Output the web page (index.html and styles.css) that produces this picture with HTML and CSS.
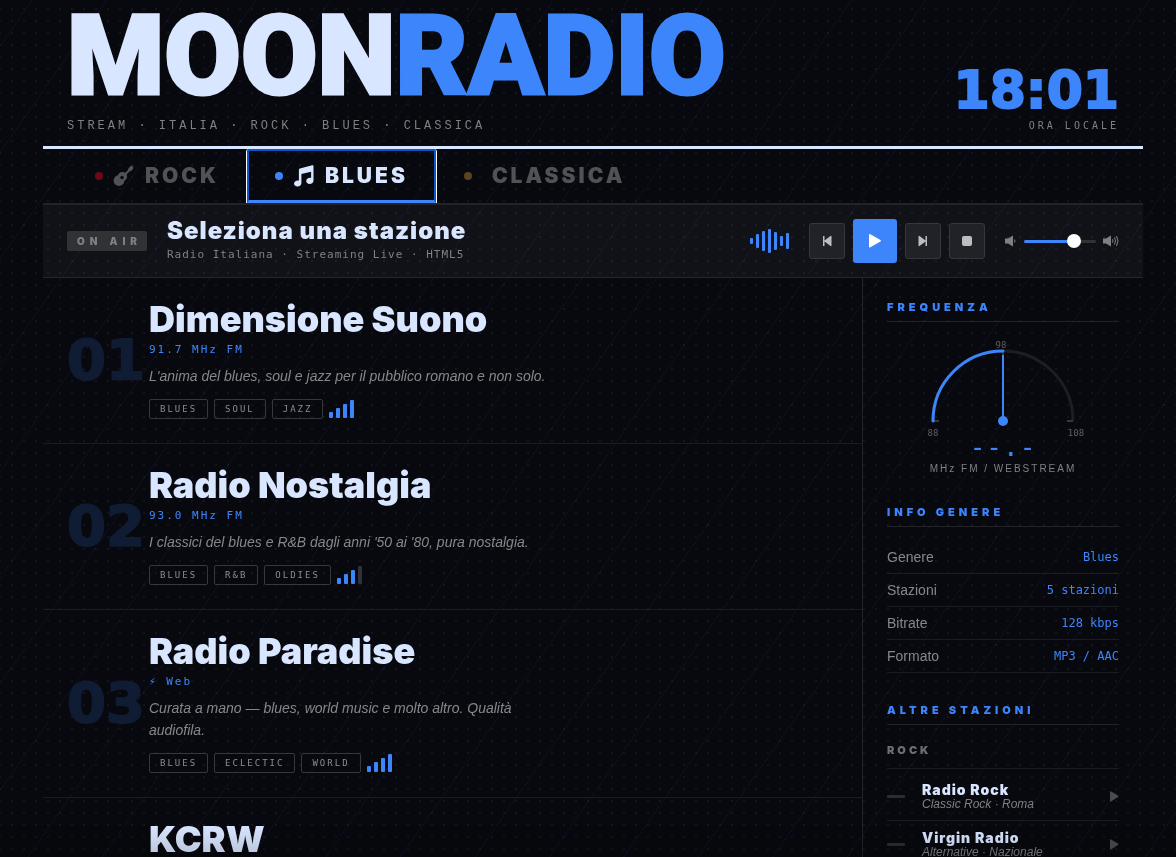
FILE: index.html
```html
<!DOCTYPE html>
<html lang="it">
<head>
  <meta charset="UTF-8">
  <meta name="viewport" content="width=device-width, initial-scale=1.0">
  <title>Moon Radio</title>
  <link rel="stylesheet" href="styles.css">
</head>
<body>
  <div class="wrapper">
    <header class="header">
      <div class="brand">
        <h1 class="logo">MOON<span>RADIO</span></h1>
        <p class="tagline">STREAM · ITALIA · ROCK · BLUES · CLASSICA</p>
      </div>
      <div class="clock">
        <div class="clock-time" id="clock">18:01</div>
        <div class="clock-label">ORA LOCALE</div>
      </div>
    </header>

    <nav class="tabs">
      <button class="tab tab-rock" type="button">
        <span class="dot"></span>
        <svg class="tab-icon" viewBox="0 0 22 22" fill="currentColor" stroke="currentColor" stroke-linecap="round">
          <circle cx="6" cy="15.500" r="5.400" stroke="none"/>
          <circle cx="9.500" cy="11.500" r="4.600" stroke="none"/>
          <path d="M11 10.500L17 4.500" stroke-width="2.200"/>
          <path d="M17 4.300L18.500 2.800" stroke-width="3.800"/>
          <circle cx="9" cy="12.500" r="1.700" fill="#08090e" stroke="none"/>
        </svg>
        ROCK
      </button>
      <button class="tab tab-blues active" type="button">
        <span class="dot"></span>
        <svg class="tab-icon" viewBox="0 0 22 22" fill="currentColor">
          <path d="M20.500 1.200v14.300c0 2-1.700 3.500-3.900 3.500-2 0-3.400-1.200-3.400-2.900 0-1.900 1.700-3.300 3.900-3.300.4 0 .7 0 1 .1V6.700L8.400 9.100v9c0 2-1.700 3.400-3.900 3.400-2 0-3.500-1.200-3.500-2.900 0-1.800 1.700-3.200 3.900-3.200.4 0 .7 0 1 .1V4.900c0-.7.4-1.100 1-1.300L19.300.3c.7-.2 1.200.2 1.200.9z"/>
        </svg>
        BLUES
      </button>
      <button class="tab tab-classica" type="button">
        <span class="dot"></span>
        CLASSICA
      </button>
    </nav>

    <section class="player">
      <span class="on-air">ON AIR</span>
      <div class="now">
        <div class="now-title">Seleziona una stazione</div>
        <div class="now-sub">Radio Italiana · Streaming Live · HTML5</div>
      </div>
      <div class="wave">
        <i class="w1"></i><i class="w2"></i><i class="w3"></i><i class="w4"></i><i class="w5"></i><i class="w6"></i><i class="w7"></i>
      </div>
      <div class="controls">
        <button class="ctrl" type="button" aria-label="Precedente">
          <svg width="12" height="12" viewBox="0 0 12 12" fill="currentColor"><path d="M2 1h1.500v4.500L9.500 1q1-.5 1 .5v9q0 1-1 .5L3.500 6.500V11H2z"/></svg>
        </button>
        <button class="ctrl ctrl-play" type="button" aria-label="Play">
          <svg width="14" height="16" viewBox="0 0 14 16" fill="currentColor"><path d="M1 2q0-1.500 1.400-.8l10 5.700q1.200.8 0 1.600l-10 5.800Q1 15 1 13.500z"/></svg>
        </button>
        <button class="ctrl" type="button" aria-label="Successiva">
          <svg width="12" height="12" viewBox="0 0 12 12" fill="currentColor"><path d="M10 1H8.500v4.500L2.500 1q-1-.5-1 .5v9q0 1 1 .5l6-4.500V11H10z"/></svg>
        </button>
        <button class="ctrl" type="button" aria-label="Stop">
          <svg width="12" height="12" viewBox="0 0 12 12" fill="currentColor"><rect x="1" y="1" width="10" height="10" rx="2"/></svg>
        </button>
      </div>
      <div class="volume">
        <svg width="12" height="12" viewBox="0 0 12 12"><path fill="currentColor" d="M0 3.500h3l5-3v11l-5-3H0z"/><path d="M9.500 4.500q1 1.500 0 3" fill="none" stroke="currentColor"/></svg>
        <input type="range" id="volume" min="0" max="100" value="74" aria-label="Volume">
        <svg width="16" height="12" viewBox="0 0 16 12"><path fill="currentColor" d="M0 3.500h3l5-3v11l-5-3H0z"/><path d="M9.500 4.200q1 1.800 0 3.600M11.500 2.500q2 3.500 0 7M13.500 1q3 5 0 10" fill="none" stroke="currentColor"/></svg>
      </div>
    </section>

    <div class="layout">
      <main class="stations">
        <article class="station">
          <div class="num">01</div>
          <div class="info">
            <h2>Dimensione Suono</h2>
            <div class="freq">91.7 MHz FM</div>
            <p class="desc">L'anima del blues, soul e jazz per il pubblico romano e non solo.</p>
            <div class="tags">
              <span class="tag">BLUES</span><span class="tag">SOUL</span><span class="tag">JAZZ</span>
              <span class="signal"><i></i><i></i><i></i><i></i></span>
            </div>
          </div>
        </article>
        <article class="station">
          <div class="num">02</div>
          <div class="info">
            <h2>Radio Nostalgia</h2>
            <div class="freq">93.0 MHz FM</div>
            <p class="desc">I classici del blues e R&amp;B dagli anni '50 ai '80, pura nostalgia.</p>
            <div class="tags">
              <span class="tag">BLUES</span><span class="tag">R&amp;B</span><span class="tag">OLDIES</span>
              <span class="signal"><i></i><i></i><i></i><i class="off"></i></span>
            </div>
          </div>
        </article>
        <article class="station">
          <div class="num">03</div>
          <div class="info">
            <h2>Radio Paradise</h2>
            <div class="freq">⚡&#xFE0E; Web</div>
            <p class="desc">Curata a mano — blues, world music e molto altro. Qualità audiofila.</p>
            <div class="tags">
              <span class="tag">BLUES</span><span class="tag">ECLECTIC</span><span class="tag">WORLD</span>
              <span class="signal"><i></i><i></i><i></i><i></i></span>
            </div>
          </div>
        </article>
        <article class="station">
          <div></div>
          <div class="info">
            <h2>KCRW</h2>
          </div>
        </article>
      </main>

      <aside class="sidebar">
        <section class="block">
          <h3>FREQUENZA</h3>
          <svg class="gauge" width="180" height="100" viewBox="0 0 180 100">
            <path d="M20 84a70 70 0 0 1 140 0" fill="none" stroke="#1d1e23" stroke-width="3"/>
            <path d="M20 84h6M154 84h6M90 14v6" stroke="#36373b" stroke-width="2"/>
            <path d="M20 84a70 70 0 0 1 70-70" fill="none" stroke="#3d85fb" stroke-width="3" stroke-linecap="round"/>
            <path d="M90 84V18" stroke="#3d85fb" stroke-width="2"/>
            <circle cx="90" cy="84" r="5" fill="#3d85fb"/>
            <text x="20" y="99">88</text>
            <text x="88" y="11">98</text>
            <text x="163" y="99">108</text>
          </svg>
          <div class="gauge-value">--.-</div>
          <div class="gauge-unit">MHz FM / WEBSTREAM</div>
        </section>

        <section class="block">
          <h3>INFO GENERE</h3>
          <dl class="facts">
            <div><dt>Genere</dt><dd>Blues</dd></div>
            <div><dt>Stazioni</dt><dd>5 stazioni</dd></div>
            <div><dt>Bitrate</dt><dd>128 kbps</dd></div>
            <div><dt>Formato</dt><dd>MP3 / AAC</dd></div>
          </dl>
        </section>

        <section class="block">
          <h3>ALTRE STAZIONI</h3>
          <h4>ROCK</h4>
          <div class="other">
            <span class="bar"></span>
            <div class="other-info">
              <strong>Radio Rock</strong>
              <em>Classic Rock · Roma</em>
            </div>
            <svg width="9" height="11" viewBox="0 0 9 11" fill="currentColor"><path d="M0 1q0-1 1-.5l7 4q1 .8 0 1.500l-7 4.500q-1 .5-1-.5z"/></svg>
          </div>
          <div class="other">
            <span class="bar"></span>
            <div class="other-info">
              <strong>Virgin Radio</strong>
              <em>Alternative · Nazionale</em>
            </div>
            <svg width="9" height="11" viewBox="0 0 9 11" fill="currentColor"><path d="M0 1q0-1 1-.5l7 4q1 .8 0 1.500l-7 4.500q-1 .5-1-.5z"/></svg>
          </div>
        </section>
      </aside>
    </div>
  </div>
</body>
</html>
```
FILE: styles.css
```css
:root {
  --bg: #08090e;
  --accent: #3d85fb;
  --light: #d9e6ff;
  --muted: #7f8083;
  --line: #1b1c21;
  --heavy: Inter, "Liberation Sans", sans-serif;
  --mono: "DejaVu Sans Mono", monospace;
}
* {
  box-sizing: border-box;
  margin: 0;
  padding: 0;
}
body {
  height: 100vh;
  overflow: hidden;
  padding-left: 10px;
  background: var(--bg);
  color: var(--light);
  font-family: "Liberation Sans", Arial, sans-serif;
}
/* dots and diagonal lines behind the page */
body::before {
  content: "";
  position: fixed;
  inset: 0;
  z-index: -1;
  pointer-events: none;
  background:
    repeating-linear-gradient(125deg, transparent 0 26px, rgba(70, 70, 255, 0.08) 26px 27px, transparent 27px 61px),
    radial-gradient(circle at 1px 1px, rgba(255, 255, 255, 0.05) 1px, transparent 1px) -1px 8px / 12px 12px;
}
/* fade at the bottom of the window */
body::after {
  content: "";
  position: fixed;
  inset: auto 0 0 0;
  height: 32px;
  z-index: 11;
  pointer-events: none;
  background: linear-gradient(transparent, rgba(0, 0, 0, 0.15));
}
.wrapper {
  max-width: 1100px;
  margin: 0 auto;
}

.header {
  display: flex;
  justify-content: space-between;
  align-items: flex-end;
  padding: 0 24px 12px;
  border-bottom: 3px solid var(--light);
}
.logo {
  font: 900 111px/112px Roboto, sans-serif;
  -webkit-text-stroke: 3px currentColor;
}
.logo span {
  color: var(--accent);
}
.tagline {
  margin-top: 6px;
  font: 12px/16px "Liberation Mono", monospace;
  letter-spacing: 3px;
  color: var(--muted);
}
.clock {
  text-align: right;
}
.clock-time {
  font: 700 52px/56px "DejaVu Sans", sans-serif;
  -webkit-text-stroke: 2px currentColor;
  color: var(--accent);
}
.clock-label {
  font: 10px/16px var(--mono);
  letter-spacing: 3px;
  color: var(--muted);
}

.tabs {
  display: flex;
  padding: 0 24px;
  border-bottom: 2px solid #222327;
}
.tab {
  display: flex;
  align-items: center;
  gap: 10px;
  height: 54px;
  padding: 0 28px;
  background: none;
  border: none;
  color: #515256;
  font: 900 21px/24px var(--heavy);
  letter-spacing: 3px;
}
.tab.active {
  color: var(--light);
  border: 2px solid #0a58c8;
  border-bottom: 3px solid var(--accent);
  border-radius: 3px 3px 0 0;
  box-shadow: 1px 0 #fff, -1px 0 #fff;
  padding: 0 26px;
}
.dot {
  width: 8px;
  height: 8px;
  border-radius: 50%;
}
.tab-rock .dot { background: #6f0718; }
.tab-blues .dot { background: var(--accent); }
.tab-classica .dot { background: #5c421d; }
.tab-classica { gap: 20px; }
.tab-icon {
  width: 22px;
  height: 22px;
}

.player {
  display: flex;
  align-items: center;
  gap: 20px;
  padding: 14px 24px;
  background: rgba(255, 255, 255, 0.04);
  border-bottom: 1px solid #25262a;
}
.on-air {
  padding: 0 5px 0 10px;
  border-radius: 2px;
  background: #313236;
  color: var(--muted);
  font: 900 10px/20px var(--heavy);
  letter-spacing: 5px;
}
.now {
  flex: 1;
}
.now-title {
  font: 900 24px/24px var(--heavy);
  letter-spacing: 1px;
}
.now-sub {
  margin-top: 4px;
  font: 11px/16px var(--mono);
  letter-spacing: 1px;
  color: var(--muted);
}
.wave {
  display: flex;
  align-items: center;
  gap: 3px;
}
.wave i {
  width: 3px;
  border-radius: 1px;
  background: var(--accent);
}
.w1 { height: 6px; }
.w2 { height: 14px; }
.w3 { height: 20px; }
.w4 { height: 24px; }
.w5 { height: 18px; }
.w6 { height: 10px; }
.w7 { height: 16px; }
.controls {
  display: flex;
  align-items: center;
  gap: 8px;
}
.ctrl {
  display: flex;
  align-items: center;
  justify-content: center;
  width: 36px;
  height: 36px;
  border: 1px solid #36373b;
  border-radius: 3px;
  background: #212227;
  color: #bcbdc0;
}
.ctrl-play {
  width: 44px;
  height: 44px;
  border: none;
  background: var(--accent);
  color: #fff;
}
.volume {
  display: flex;
  align-items: center;
  gap: 7px;
  color: var(--muted);
}
.volume input {
  -webkit-appearance: none;
  appearance: none;
  width: 72px;
  height: 3px;
  border-radius: 2px;
  background: linear-gradient(to right, var(--accent) 70%, #313236 70%);
}
.volume input::-webkit-slider-thumb {
  -webkit-appearance: none;
  width: 14px;
  height: 14px;
  border-radius: 50%;
  background: #fff;
}

.layout {
  display: grid;
  grid-template-columns: 1fr 281px;
}
.station {
  display: grid;
  grid-template-columns: 82px 1fr;
  align-items: center;
  padding: 23px 24px 24px;
  border-bottom: 1px solid var(--line);
}
.num {
  font: 700 56px/56px "DejaVu Sans", sans-serif;
  -webkit-text-stroke: 2px currentColor;
  color: #101c33;
}
.station h2 {
  font: 900 36px/36px var(--heavy);
}
.freq {
  margin-top: 5px;
  font: 11px/16px var(--mono);
  letter-spacing: 2px;
  color: var(--accent);
}
.desc {
  max-width: 410px;
  margin-top: 7px;
  font-size: 14px;
  line-height: 22px;
  font-style: italic;
  color: #86878a;
}
.tags {
  display: flex;
  gap: 6px;
  margin-top: 12px;
}
.tag {
  padding: 0 10px;
  border: 1px solid #36373b;
  border-radius: 2px;
  font: 9px/18px var(--mono);
  letter-spacing: 2px;
  color: #8b8c8f;
}
.signal {
  display: flex;
  align-items: flex-end;
  gap: 3px;
  height: 19px;
}
.signal i {
  width: 4px;
  height: 6px;
  border-radius: 1px;
  background: var(--accent);
}
.signal i:nth-child(2) { height: 10px; }
.signal i:nth-child(3) { height: 14px; }
.signal i:nth-child(4) { height: 18px; }
.signal .off { background: #313236; }

.sidebar {
  border-left: 1px solid #222327;
  padding: 21px 24px;
}
.block {
  margin-bottom: 29px;
}
.block h3 {
  padding-bottom: 6px;
  border-bottom: 1px solid #222327;
  color: var(--accent);
  font: 900 11px/16px var(--heavy);
  letter-spacing: 4px;
}
.gauge {
  display: block;
  margin: 15px auto 0;
}
.gauge text {
  font: 9px var(--mono);
  fill: #5e5f63;
  text-anchor: middle;
}
.gauge-value {
  font: 26px/20px var(--mono);
  letter-spacing: 1px;
  text-align: center;
  color: var(--accent);
}
.gauge-unit {
  margin-top: 6px;
  font-size: 10px;
  line-height: 12px;
  letter-spacing: 2px;
  text-align: center;
  color: var(--muted);
}
.facts {
  margin-top: 14px;
}
.facts div {
  display: flex;
  justify-content: space-between;
  border-bottom: 1px solid var(--line);
  line-height: 32px;
}
.facts dt {
  font-size: 14px;
  color: #86878a;
}
.facts dd {
  font-family: var(--mono);
  font-size: 12px;
  color: var(--accent);
}
.block h4 {
  margin: 17px 0 4px;
  padding-bottom: 10px;
  border-bottom: 1px solid var(--line);
  color: #6d6e71;
  font: 900 11px/16px var(--heavy);
  letter-spacing: 3px;
}
.other {
  display: flex;
  align-items: center;
  gap: 17px;
  height: 48px;
  border-bottom: 1px solid var(--line);
  color: #4a4b4f;
}
.bar {
  width: 18px;
  height: 3px;
  border-radius: 1px;
  background: #2c2d31;
}
.other-info {
  flex: 1;
}
.other-info strong {
  display: block;
  color: var(--light);
  font: 900 14px/14px var(--heavy);
  letter-spacing: 1px;
}
.other-info em {
  display: block;
  color: var(--muted);
  font-size: 12px;
  line-height: 14px;
}
```
